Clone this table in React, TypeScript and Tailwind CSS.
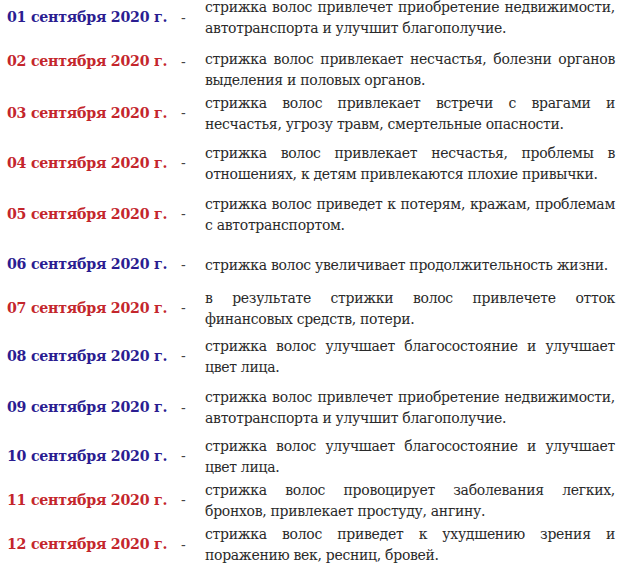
const BLUE = "text-[#2b1d91]";
const RED = "text-[#c4262c]";

type Row = {
  day: string;
  blue: boolean;
  text: string;
  h: string;
  textPad?: string;
  datePad?: string;
};

const rows: Row[] = [
  { day: "01", blue: true, h: "h-[48px]", text: "стрижка волос привлечет приобретение недвижимости, автотранспорта и улучшит благополучие." },
  { day: "02", blue: false, h: "h-[47px]", textPad: "pt-[9px]", datePad: "pb-[7px]", text: "стрижка волос привлекает несчастья, болезни органов выделения и половых органов." },
  { day: "03", blue: false, h: "h-[49px]", text: "стрижка волос привлекает встречи с врагами и несчастья, угрозу травм, смертельные опасности." },
  { day: "04", blue: false, h: "h-[51px]", text: "стрижка волос привлекает несчастья, проблемы в отношениях, к детям привлекаются плохие привычки." },
  { day: "05", blue: false, h: "h-[51px]", text: "стрижка волос приведет к потерям, кражам, проблемам с автотранспортом." },
  { day: "06", blue: true, h: "h-[46px]", textPad: "pt-[4px]", datePad: "pt-[4px]", text: "стрижка волос увеличивает продолжительность жизни." },
  { day: "07", blue: false, h: "h-[45px]", text: "в результате стрижки волос привлечете отток финансовых средств, потери." },
  { day: "08", blue: true, h: "h-[51px]", text: "стрижка волос улучшает благосостояние и улучшает цвет лица." },
  { day: "09", blue: true, h: "h-[52px]", text: "стрижка волос привлечет приобретение недвижимости, автотранспорта и улучшит благополучие." },
  { day: "10", blue: true, h: "h-[45px]", text: "стрижка волос улучшает благосостояние и улучшает цвет лица." },
  { day: "11", blue: false, h: "h-[43px]", text: "стрижка волос провоцирует заболевания легких, бронхов, привлекает простуду, ангину." },
  { day: "12", blue: false, h: "h-[46px]", text: "стрижка волос приведет к ухудшению зрения и поражению век, ресниц, бровей." },
];

export default function App() {
  return (
    <div className="h-[568px] w-[620px] overflow-hidden bg-white">
      <div className="-mt-[6px] flex flex-col">
        {rows.map((r) => (
          <div key={r.day} className={`flex items-center ${r.h}`}>
            <div
              className={`w-[181px] shrink-0 pl-[7px] font-['DejaVu_Serif',serif] text-[14.2px] font-bold tracking-[-0.25px] ${
                r.blue ? BLUE : RED
              } ${r.datePad ?? ""}`}
            >
              {r.day} сентября 2020 г.
            </div>
            <div className={`w-[24px] shrink-0 font-['DejaVu_Serif',serif] text-[14px] text-[#444] ${r.datePad ?? ""}`}>
              -
            </div>
            <p
              className={`w-[410px] text-justify font-['DejaVu_Serif',serif] text-[14px] leading-[21px] tracking-[-0.3px] text-[#2a2a2a] ${
                r.textPad ?? ""
              }`}
            >
              {r.text}
            </p>
          </div>
        ))}
      </div>
    </div>
  );
}
